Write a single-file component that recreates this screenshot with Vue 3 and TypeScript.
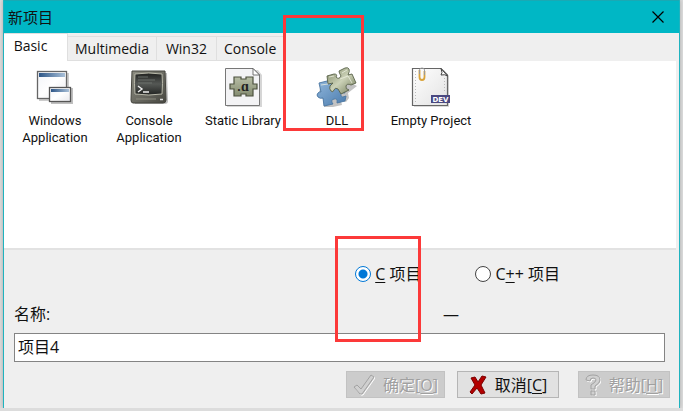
<script setup lang="ts">
import { ref } from 'vue'

type IconName = 'windows' | 'console' | 'static' | 'dll' | 'empty'
interface Template {
  icon: IconName
  label: string
}

const tabs = ['Basic', 'Multimedia', 'Win32', 'Console']
const activeTab = ref('Basic')
const templates: Template[] = [
  { icon: 'windows', label: 'Windows Application' },
  { icon: 'console', label: 'Console Application' },
  { icon: 'static', label: 'Static Library' },
  { icon: 'dll', label: 'DLL' },
  { icon: 'empty', label: 'Empty Project' },
]
const language = ref('c')
const projectName = ref('项目4')
</script>

<template>
  <main class="dialog">
    <header class="titlebar">
      <h1>新项目</h1>
      <button class="close" type="button" aria-label="关闭">
        <svg width="12" height="12" viewBox="0 0 12 12"><path d="M.5 .5 11.5 11.5M11.5 .5 .5 11.5" stroke="#000" stroke-width="1.2" /></svg>
      </button>
    </header>

    <nav class="tabs" role="tablist">
      <button
        v-for="tab in tabs"
        :key="tab"
        type="button"
        role="tab"
        class="tab"
        :class="{ active: tab === activeTab }"
        :aria-selected="tab === activeTab"
        @click="activeTab = tab"
      >{{ tab }}</button>
    </nav>

    <section class="panel">
      <button v-for="item in templates" :key="item.icon" type="button" class="item">
        <svg v-if="item.icon === 'windows'" width="42" height="42" viewBox="0 0 42 42">
          <defs>
            <linearGradient id="wbar"><stop offset="0" stop-color="#2d5687" /><stop offset="1" stop-color="#a9c0d8" /></linearGradient>
            <linearGradient id="wbody" x2="1" y2="1"><stop offset="0" stop-color="#f1f3f8" /><stop offset=".5" stop-color="#fff" /><stop offset="1" stop-color="#e8e8ec" /></linearGradient>
          </defs>
          <path d="M5 8h30v28H5z" fill="#000" opacity=".2" />
          <rect x="3.500" y="6.500" width="29" height="27" fill="url(#wbody)" stroke="#666" stroke-width="1.300" />
          <rect x="5" y="8" width="26" height="4" fill="url(#wbar)" />
          <path d="M17 23h22v16H17z" fill="#000" opacity=".25" />
          <rect x="15.500" y="22.500" width="21" height="14" fill="url(#wbody)" stroke="#555" stroke-width="1.300" />
          <rect x="17" y="24" width="18" height="3" fill="url(#wbar)" />
        </svg>

        <svg v-else-if="item.icon === 'console'" width="42" height="42" viewBox="0 0 42 42">
          <defs>
            <linearGradient id="cbody" x2="1" y2="1"><stop offset="0" stop-color="#8c8c80" /><stop offset=".6" stop-color="#66665e" /><stop offset="1" stop-color="#45453e" /></linearGradient>
            <linearGradient id="cscr" x2="0" y2="1"><stop offset="0" stop-color="#20211f" /><stop offset=".5" stop-color="#555855" /><stop offset="1" stop-color="#222422" /></linearGradient>
          </defs>
          <path d="M5 8 39 8 40 36Q40 39 37 39H7Z" fill="#000" opacity=".25" />
          <path d="M4 6H37L38 35Q38 38 35 38H5Q3 38 3 35Z" fill="url(#cbody)" stroke="#45453e" />
          <path d="M7 9Q21 7 34 9 35 18 34 29 21 31 7 29 6 18 7 9Z" fill="url(#cscr)" stroke="#b9b9aa" />
          <path d="M8 34H28" stroke="#8c8c80" />
          <path d="M32 34.500h3" stroke="#ddd" stroke-width="1.500" />
          <path d="M10 21l4 3-4 3M15 27h6" fill="none" stroke="#eee" stroke-width="1.400" />
          <path d="M10 12h10M10 15h17M10 18h14" stroke="#747974" stroke-width=".8" />
        </svg>

        <svg v-else-if="item.icon === 'static'" width="42" height="42" viewBox="0 0 42 42">
          <defs><linearGradient id="sp" x2="0" y2="1"><stop offset="0" stop-color="#b7bda5" /><stop offset="1" stop-color="#848c71" /></linearGradient></defs>
          <path d="M5 5H36L40 10V42H5Z" fill="#000" opacity=".16" />
          <path d="M3.500 3.500H31L37.500 10V40.500H3.500Z" fill="#f3f3f5" stroke="#777" />
          <path d="M31 3.500V10h6.500z" fill="#fff" stroke="#555" stroke-width=".8" />
          <path d="M12 12h7v2h5v-2h7v7h4v5h-4v7h-7v-2h-5v2h-7v-7H8v-5h4z" fill="url(#sp)" stroke="#4c513f" stroke-width="1.200" />
          <text x="21" y="26" text-anchor="middle" font-family="Open Sans" font-size="14" font-weight="600" fill="#222">.ɑ</text>
        </svg>

        <svg v-else-if="item.icon === 'dll'" width="42" height="42" viewBox="0 0 42 42">
          <defs>
            <linearGradient id="blue" x2="1" y2="1"><stop offset="0" stop-color="#8fb5da" /><stop offset="1" stop-color="#4a7bad" /></linearGradient>
            <linearGradient id="olive" x2="1" y2="1"><stop offset="0" stop-color="#7f8865" /><stop offset=".5" stop-color="#ccd2b8" /><stop offset="1" stop-color="#6b7551" /></linearGradient>
          </defs>
          <path d="M4 22l14-2 19-1 4 2-9 7 1 5-3 4-5-1 1 4-9 2H8l-1-8-4-3z" fill="#000" opacity=".24" />
          <path d="M3 18l8-2 10 1 6 6 2 5q-5-1-4 3 1 2 5 0l-1 5-8 2q1-5-3-4t-1 5l-9 2-1-8q-3 1-5-1-2-2 0-4t3-1z" fill="url(#blue)" stroke="#4a76a2" stroke-width=".9" />
          <path d="M11 11l7-2q4 0 2 3 3 3 5-1-2-3-2-5l6-3q3-1 4 1t-1 6l4-1 4 9-5 2q-4-2-5 1t3 4l-8 4-3-5q-3-2-4 1t-3 1-1-5l3-3-5 1z" fill="url(#olive)" stroke="#59624a" stroke-width=".9" />
          <path d="M13 12l5-1M26 8l5-3M24 14l8-3 4 7M5 20l7-1" fill="none" stroke="#eef0e2" opacity=".75" />
        </svg>

        <svg v-else width="42" height="42" viewBox="0 0 42 42">
          <defs><linearGradient id="paper" x2="1" y2="1"><stop offset="0" stop-color="#fff" /><stop offset="1" stop-color="#e2e2e2" /></linearGradient></defs>
          <path d="M5 5H34L39 11V42H4Z" fill="#000" opacity=".15" />
          <path d="M2.500 3.500H31L37.500 10V40.500H2.500Z" fill="url(#paper)" stroke="#666" stroke-width="1.200" />
          <path d="M31 3.500Q33 8 31 10q4-1 6.500 1z" fill="#fff" stroke="#444" />
          <path d="M5.500 6v32M34.500 13v15" stroke="#bbb" stroke-dasharray="1 2" />
          <path d="M9.500 5V12q0 3 2.500 3t2.500-3V6" fill="none" stroke="#d9a33a" stroke-width="1.800" />
          <path d="M9.500 9V5q0-2 2.500-2t2.500 2v5" fill="none" stroke="#999" />
          <rect x="21" y="30" width="19" height="8" fill="#4a4880" />
          <text x="30.500" y="36.500" text-anchor="middle" font-family="DejaVu Sans" font-size="7" font-weight="700" fill="#fff">DEV</text>
        </svg>
        <span>{{ item.label }}</span>
      </button>
    </section>

    <form class="form" @submit.prevent>
      <div class="languages">
        <label><input v-model="language" type="radio" name="language" value="c" /><span><u>C</u> 项目</span></label>
        <label><input v-model="language" type="radio" name="language" value="cpp" /><span>C<u>+</u>+ 项目</span></label>
      </div>
      <div class="caption">
        <label for="project-name">名称:</label>
        <span>—</span>
      </div>
      <input id="project-name" v-model="projectName" class="name" type="text" />
      <div class="actions">
        <button type="button" class="action ok" disabled>
          <svg width="22" height="22" viewBox="0 0 22 22"><path d="M1 13l3-2 4 4L18 1l3 2L9 20H7z" fill="none" stroke="#fff" transform="translate(1 1)" /><path d="M1 13l3-2 4 4L18 1l3 2L9 20H7z" fill="#d0d0d0" stroke="#a2a2a2" /></svg>
          <span>确定[<u>O</u>]</span>
        </button>
        <button type="button" class="action cancel">
          <svg width="18" height="20" viewBox="0 0 18 20"><path d="M2 3l4-1 3 5 4-6 4 1-5 8 4 8-4 1-4-6-5 6-2-2 5-7z" fill="#b30000" stroke="#7a0000" /></svg>
          <span>取消[<u>C</u>]</span>
        </button>
        <button type="button" class="action help" disabled>
          <svg width="16" height="22" viewBox="0 0 16 22"><path d="M1 6q0-5 7-5t7 5q0 3-5 6v3H6v-4q5-3 5-5 0-2-3-2T5 7zM6 17h4v4H6z" fill="none" stroke="#fff" transform="translate(1 1)" /><path d="M1 6q0-5 7-5t7 5q0 3-5 6v3H6v-4q5-3 5-5 0-2-3-2T5 7zM6 17h4v4H6z" fill="#d0d0d0" stroke="#a2a2a2" /></svg>
          <span>帮助[<u>H</u>]</span>
        </button>
      </div>
    </form>
    <div class="mark mark-template"></div>
    <div class="mark mark-language"></div>
  </main>
</template>

<style>
body {
  background: #dcdcdc;
}
</style>

<style scoped>
* {
  box-sizing: border-box;
}
.dialog {
  position: relative;
  margin: 0 3px;
  background: #efefef;
  border: solid #1fb3bf;
  border-width: 0 1px;
  box-shadow: 0 0 4px #aaa;
  color: #111;
  font: 16px/20px "Open Sans", "Noto Sans CJK SC", sans-serif;
}
button,
input {
  font: inherit;
  color: inherit;
}
button {
  padding: 0;
  border: 0;
  background: none;
}
u {
  text-underline-offset: 2px;
}
.titlebar {
  display: flex;
  align-items: center;
  justify-content: space-between;
  height: 33px;
  padding: 0 15px 0 4px;
  background: #00b7c5;
  border-top: 1px solid #1aa9b4;
}
h1 {
  margin: 0;
  font: inherit;
  font-size: 15px;
}
.close {
  display: flex;
}
.tabs {
  display: flex;
  align-items: flex-end;
  height: 28px;
}
.tab {
  height: 25px;
  min-width: 60px;
  padding: 0 7px;
  border: 1px solid #dfdfdf;
  border-left: 0;
  font-size: 14px;
}
.tab.active {
  height: 28px;
  width: 64px;
  padding: 0 10px 4px 0;
  background: #fff;
  border-bottom: 0;
}
.panel {
  display: grid;
  grid-template-columns: repeat(auto-fill, 94px);
  align-content: start;
  height: 189px;
  margin-right: 3px;
  padding: 4px;
  background: #fff;
  border-bottom: 2px solid #e2e2e2;
}
.item {
  display: flex;
  flex-direction: column;
  align-items: center;
  gap: 5px;
  padding: 0 12px;
  white-space: normal;
  font: 13px/17px Roboto, sans-serif;
}
.item span {
  margin: 0 -12px;
}
.form {
  padding: 14px 9px 10px 10px;
}
.languages {
  display: flex;
  justify-content: flex-end;
  gap: 54px;
  padding-right: 110px;
}
.languages label {
  display: flex;
  align-items: center;
  gap: 4px;
}
.languages input {
  width: 16px;
  height: 16px;
  margin: 0;
  appearance: none;
  background: #fff;
  border: 1px solid #444;
  border-radius: 50%;
}
.languages input:checked {
  border-color: #0078d7;
  background: radial-gradient(circle, #0078d7 0 4px, #fff 5px);
}
.caption {
  display: flex;
  justify-content: space-between;
  margin: 20px 0 9px;
  padding-right: 211px;
}
.name {
  display: block;
  width: calc(100% - 5px);
  height: 29px;
  padding: 0 3px 3px;
  background: #fff;
  border: 1px solid #848484;
  border-radius: 0;
  outline: 0;
}
.actions {
  display: flex;
  justify-content: flex-end;
  margin-top: 9px;
}
.action {
  display: flex;
  align-items: center;
  justify-content: center;
  gap: 8px;
  width: 92px;
  height: 27px;
  border: 1px solid #b5b5b5;
  background: #e1e1e1;
}
.ok {
  width: 99px;
}
.cancel {
  width: 102px;
  margin: 0 19px 0 12px;
}
.action:disabled {
  background: #ccc;
  border-color: #c2c2c2;
  color: #a0a0a0;
  text-shadow: 1px 1px #fff;
}
.mark {
  position: absolute;
  border: 3px solid #fc3939;
  pointer-events: none;
}
.mark-template {
  left: 279px;
  top: 15px;
  width: 81px;
  height: 116px;
}
.mark-language {
  left: 331px;
  top: 236px;
  width: 86px;
  height: 106px;
}
</style>
